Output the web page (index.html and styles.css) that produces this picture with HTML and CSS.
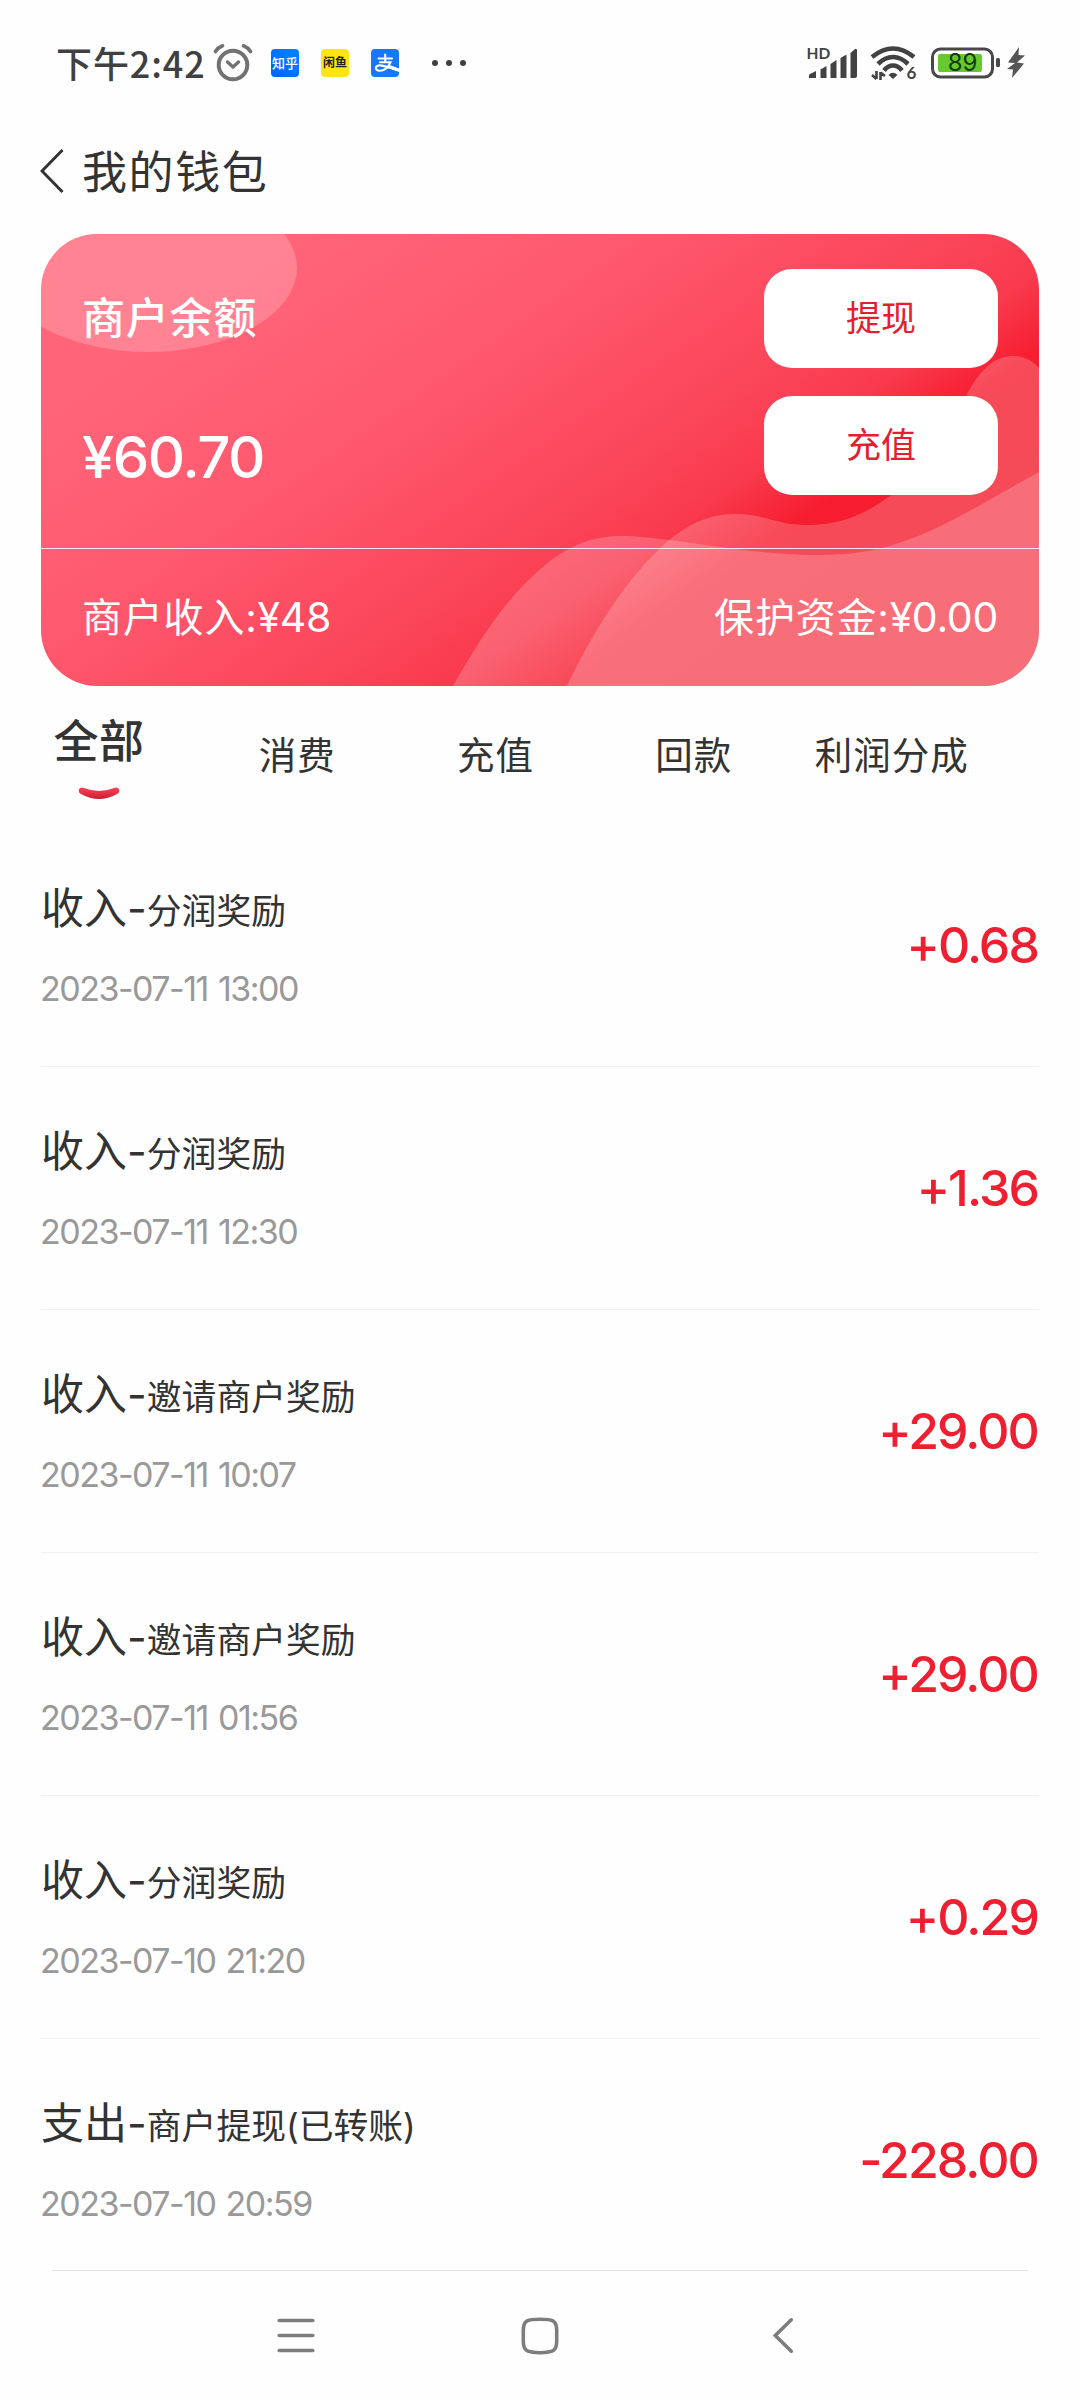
FILE: index.html
```html
<!DOCTYPE html>
<html lang="zh-CN">
<head>
<meta charset="utf-8">
<title>我的钱包</title>
<link rel="stylesheet" href="styles.css">
</head>
<body>
<div class="screen">
  <div class="status">
    <span class="time">下午2:42</span>
    <svg class="alarm" width="40" height="38" viewBox="0 0 40 38" fill="none" stroke="#727272" stroke-linecap="round">
      <circle cx="20" cy="21" r="14.3" stroke-width="4"/>
      <path d="M2.500 7.500Q5 3.500 9.500 1.800M37.500 7.500Q35 3.500 30.500 1.800" stroke-width="3.600"/>
      <path d="M14.500 18L20 23L25.500 18" stroke-width="3.400" stroke-linejoin="round"/>
    </svg>
    <span class="app zhihu">知乎</span>
    <span class="app xianyu">闲鱼</span>
    <span class="app alipay">
      <svg width="28" height="28" viewBox="0 0 28 28" fill="none" stroke="#fff" stroke-width="2.100" stroke-linecap="round">
        <path d="M7.500 9.500H21M14.200 5.500V13M9 13.200H19.500C17.500 18.500 13 22 8.500 21.800C4 21.500 3.800 17.500 7.500 16.500C12 15.500 20 19.500 28 21.800"/>
        <path d="M18 17.500L28 21.200" stroke-width="3"/>
      </svg>
    </span>
    <svg class="dots" width="36" height="8" viewBox="0 0 36 8" fill="#404040"><circle cx="4" cy="4" r="3"/><circle cx="18" cy="4" r="3"/><circle cx="32" cy="4" r="3"/></svg>
    <svg class="signal" width="53" height="38" viewBox="-2 -4 53 38" fill="#424242">
      <text x="-.5" y="13" class="hd">HD</text>
      <path d="M2 32V29.500Q2 28.500 3 28L9 25V32ZM13.500 32V23.500L19.500 20V32ZM23.500 32V18L29.500 14V32ZM33.500 32V12L39.500 8.500V32ZM43.500 32V7L48 3Q50 1.800 50 4.500V30Q50 32 48 32Z"/>
    </svg>
    <svg class="wifi" width="52" height="44" viewBox="0 -4 52 44" fill="none" stroke="#424242" stroke-width="4.600">
      <path d="M2 12Q12.500 3.500 23 3.500T44 12M8 19Q15 12 23 12T38 19M14 25.500Q18 20.500 23 20.500T32 25.500"/>
      <path d="M18.500 30Q23 25.500 27.500 30L23 34Z" fill="#424242" stroke="none"/>
      <path d="M6.500 26V34M2 30L6.500 34M10.500 35V27M10.500 27.500L15 31" stroke-width="2.600"/>
      <text x="36.500" y="34" class="six">6</text>
    </svg>
    <svg class="battery" width="70" height="32" viewBox="0 0 70 32">
      <rect x="1.500" y="2" width="60" height="28" rx="8" fill="#fff" stroke="#484848" stroke-width="3"/>
      <rect x="7" y="7" width="44" height="18" rx="2" fill="#67c92d"/>
      <rect x="65" y="11" width="4" height="9" rx="1.500" fill="#484848"/>
      <text x="31.500" y="24" class="pct">89</text>
    </svg>
    <svg class="bolt" width="18" height="32" viewBox="0 0 18 32" fill="#555"><path d="M12 0L1 15.500L8 16L0 22L6 22.500L5 31L17 16.500L10 15.500L18 8.500L11.500 8Z"/></svg>
  </div>

  <div class="header">
    <svg class="back" width="24" height="46" viewBox="0 0 24 46" fill="none" stroke="#333" stroke-width="3"><path d="M22.500 2L2 23L22.500 44"/></svg>
    <h1 class="title">我的钱包</h1>
  </div>

  <div class="card">
    <svg class="card-art" width="998" height="452" viewBox="41 234 998 452" fill="#fff" fill-opacity=".2">
      <ellipse cx="148" cy="268" rx="149" ry="84"/>
      <path d="M453 686C482 635 510 592 550 561C575 543 595 536 622 536C665 536 745 555 820 555C905 555 950 521 1039 472V686Z"/>
      <path d="M567 686C590 638 625 578 668 541C695 519 715 514 736 514C765 514 775 525 807 525C845 525 870 511 891 495C930 465 950 430 966 396C982 365 998 356 1013 356Q1028 356 1039 368V686Z"/>
    </svg>
    <div class="card-main">
      <div class="balance">
        <div class="label">商户余额</div>
        <div class="amount">¥60.70</div>
      </div>
      <div class="actions">
        <div class="btn">提现</div>
        <div class="btn">充值</div>
      </div>
    </div>
    <div class="card-foot">
      <span>商户收入:<span class="sum">¥48</span></span>
      <span>保护资金:<span class="sum">¥0.00</span></span>
    </div>
  </div>

  <div class="tabs">
    <div class="tab active">
      <span>全部</span>
      <svg width="42" height="13" viewBox="0 0 42 13" fill="none"><defs><linearGradient id="smile" x1="0" y1="0" x2="0" y2="1"><stop offset="0" stop-color="#fa4358"/><stop offset="1" stop-color="#cf1c31"/></linearGradient></defs><path d="M1 2Q3-.5 6 1Q21 7 36 1Q39-.5 41 2Q42 6 39 7Q21 17 3 7Q0 6 1 2Z" fill="url(#smile)"/></svg>
    </div>
    <div class="tab">消费</div>
    <div class="tab">充值</div>
    <div class="tab">回款</div>
    <div class="tab">利润分成</div>
  </div>

  <div class="list">
    <div class="row"><div><div class="name">收入-<span class="sub">分润奖励</span></div><div class="date">2023-07-11 13:00</div></div><div class="value">+0.68</div></div>
    <div class="row"><div><div class="name">收入-<span class="sub">分润奖励</span></div><div class="date">2023-07-11 12:30</div></div><div class="value">+1.36</div></div>
    <div class="row"><div><div class="name">收入-<span class="sub">邀请商户奖励</span></div><div class="date">2023-07-11 10:07</div></div><div class="value">+29.00</div></div>
    <div class="row"><div><div class="name">收入-<span class="sub">邀请商户奖励</span></div><div class="date">2023-07-11 01:56</div></div><div class="value">+29.00</div></div>
    <div class="row"><div><div class="name">收入-<span class="sub">分润奖励</span></div><div class="date">2023-07-10 21:20</div></div><div class="value">+0.29</div></div>
    <div class="row"><div><div class="name">支出-<span class="sub">商户提现(已转账)</span></div><div class="date">2023-07-10 20:59</div></div><div class="value">-228.00</div></div>
  </div>

  <div class="navbar">
    <svg width="38" height="38" viewBox="0 0 38 38" stroke="#7d7d7d" stroke-width="3.600" stroke-linecap="round"><path d="M2.200 3.500H35.800M2.200 18.500H35.800M2.200 33.500H35.800"/></svg>
    <svg width="38" height="38" viewBox="0 0 38 38" fill="none" stroke="#7d7d7d" stroke-width="3.600"><path d="M19 2.300C31 2.300 35.700 3 35.700 13V24C35.700 34 32 35.700 19 35.700C6 35.700 2.300 34 2.300 24V13C2.300 3 7 2.300 19 2.300Z"/></svg>
    <svg width="38" height="38" viewBox="0 0 38 38" fill="none" stroke="#7d7d7d" stroke-width="3.600" stroke-linecap="round"><path d="M26.300 2.800L10.300 18.500L26.300 34.200"/></svg>
  </div>
</div>
</body>
</html>
```
FILE: styles.css
```css
* { box-sizing: border-box; }
body {
  margin: 0;
  background: #fefefe;
  color: #333;
  font-family: Inter, "Noto Sans CJK SC", sans-serif;
}
svg { display: block; flex: none; }
.screen {
  width: 1080px;
  height: 2400px;
  display: flex;
  flex-direction: column;
  overflow: hidden;
}

/* Status bar */
.status {
  height: 126px;
  padding-left: 56px;
  display: flex;
  align-items: center;
  color: #404040;
}
.time {
  width: 157px;
  padding-bottom: 3px;
  font: 500 36px/50px "Noto Sans CJK SC", sans-serif;
  letter-spacing: .9px;
  white-space: nowrap;
}
.alarm { margin-right: 18px; }
.app {
  width: 28px;
  height: 28px;
  margin-right: 22px;
  border-radius: 4px;
  font-size: 13px;
  line-height: 28px;
  text-align: center;
  white-space: nowrap;
}
.zhihu { background: linear-gradient(45deg, #0062ff, #0085ff); color: #fff; font-weight: 500; }
.xianyu { background: #ffe60f; color: #222; font-size: 12px; font-weight: 700; }
.alipay { background: #1677ff; }
.dots { margin-left: 10px; margin-right: 338px; }
.signal { margin-right: 12px; margin-top: -4px; }
.wifi { margin-right: 9px; }
.battery { margin-right: 6px; }
.hd { font: 700 15.500px Lato, sans-serif; }
.six { font: 700 17px Lato, sans-serif; fill: #424242; stroke: none; }
.pct { font: 400 24px Inter, sans-serif; text-anchor: middle; fill: #173b10; }

/* Page header */
.header {
  height: 90px;
  padding-left: 40px;
  display: flex;
  align-items: center;
}
.title {
  margin: 3px 0 0 18px;
  font-size: 45px;
  font-weight: 400;
  line-height: 60px;
  letter-spacing: 1.600px;
}

/* Balance card */
.card {
  position: relative;
  width: 998px;
  height: 452px;
  margin: 18px 0 0 41px;
  border-radius: 56px;
  overflow: hidden;
  color: #fff;
  background: linear-gradient(145deg, #ff6479 16%, #ff5a6f 35%, #fb4458 57%, #f93a4d 64%, #f71d30 71%, #f31d2e 80%, #f21d2e 100%);
}
.card-art { position: absolute; left: 0; top: 0; }
.card-main {
  position: relative;
  height: 315px;
  padding: 35px 41px 0 41px;
  display: flex;
  justify-content: space-between;
  border-bottom: 1px solid #ffe8ec;
}
.label {
  margin-top: 19px;
  font-size: 43px;
  font-weight: 500;
  line-height: 60px;
  letter-spacing: .8px;
}
.amount {
  margin-top: 74px;
  font-size: 58px;
  font-weight: 500;
  line-height: 70px;
  letter-spacing: -1.500px;
}
.actions {
  display: flex;
  flex-direction: column;
  gap: 28px;
}
.btn {
  width: 234px;
  height: 99px;
  border-radius: 28px;
  background: #fff;
  color: #e3202f;
  font-size: 35px;
  line-height: 99px;
  text-align: center;
}
.card-foot {
  position: relative;
  padding: 38px 41px 0 41px;
  display: flex;
  justify-content: space-between;
  font-size: 40px;
  line-height: 60px;
  letter-spacing: .8px;
}
.sum {
  font-size: 41px;
  letter-spacing: -.3px;
}

/* Filter tabs */
.tabs {
  width: 991px;
  height: 138px;
  display: grid;
  grid-template-columns: repeat(5, 198.200px);
  text-align: center;
}
.tab {
  padding-top: 40px;
  font-size: 37.500px;
  line-height: 60px;
  letter-spacing: 1px;
}
.active {
  padding-top: 26px;
  display: flex;
  flex-direction: column;
  align-items: center;
  gap: 15px;
  font-size: 45px;
  font-weight: 500;
  letter-spacing: .5px;
}

/* Transactions */
.list {
  height: 1446px;
  overflow: hidden;
  padding: 0 41px;
}
.row {
  height: 243px;
  display: flex;
  justify-content: space-between;
  border-bottom: 1px solid #f0f0f0;
}
.row:last-child { border: 0; }
.name {
  margin-top: 54px;
  font-size: 43px;
  line-height: 60px;
}
.sub { font-size: 34.800px; }
.date {
  margin-top: 23px;
  margin-left: -1px;
  color: #999;
  font-size: 34px;
  line-height: 50px;
  letter-spacing: -1.500px;
  word-spacing: 2px;
}
.value {
  margin-right: 1px;
  color: #ed1f30;
  font-size: 50px;
  font-weight: 500;
  line-height: 243px;
  letter-spacing: -1.900px;
}

/* System navigation */
.navbar {
  height: 130px;
  margin: 0 52px;
  border-top: 1px solid #e3e3e3;
  padding: 46px 225px 0;
  display: flex;
  justify-content: space-between;
  align-items: flex-start;
}
```
